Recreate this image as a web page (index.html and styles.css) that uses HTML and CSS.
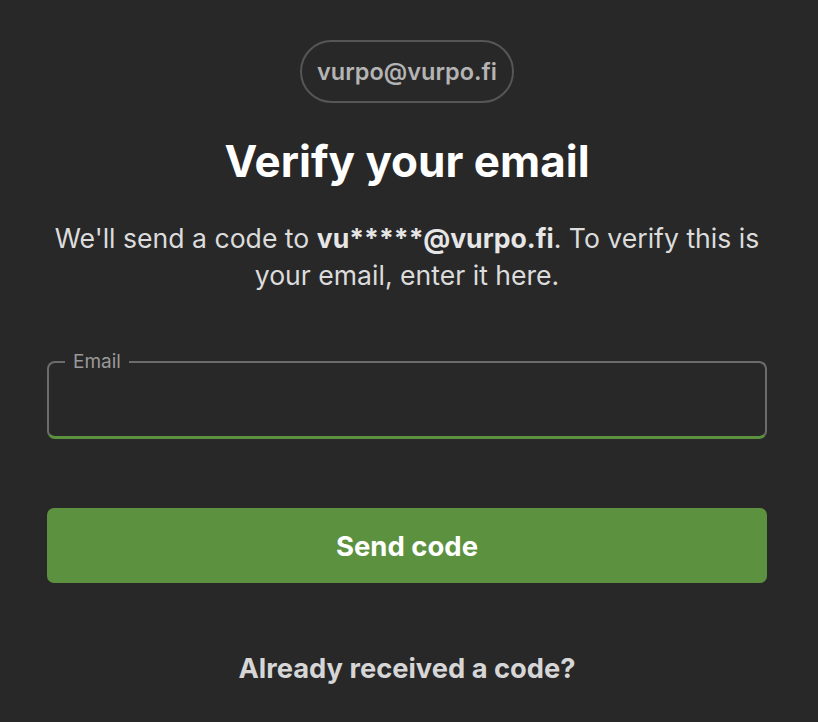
FILE: index.html
```html
<!DOCTYPE html>
<html lang="en">
<head>
<meta charset="utf-8">
<title>Verify your email</title>
<link rel="stylesheet" href="styles.css">
</head>
<body>
<main class="page">
  <div class="account-pill">vurpo@vurpo.fi</div>
  <h1 class="title">Verify your email</h1>
  <p class="desc">We'll send a code to <strong>vu*****@vurpo.fi</strong>. To verify this is your email, enter it here.</p>
  <fieldset class="field">
    <legend class="field-label">Email</legend>
    <input class="field-input" type="email" aria-label="Email">
  </fieldset>
  <button class="primary-btn" type="button">Send code</button>
  <div class="secondary-link">Already received a code?</div>
</main>
</body>
</html>
```
FILE: styles.css
```css
html, body {
  margin: 0;
  padding: 0;
  background: #282828;
}
body {
  font-family: Inter, "Noto Sans", "Liberation Sans", sans-serif;
  color: #e0e0e0;
}
.page {
  display: flex;
  flex-direction: column;
  align-items: center;
  padding: 40px 51px 0 47px;
}
.account-pill {
  box-sizing: border-box;
  height: 63px;
  padding: 0 15px;
  display: flex;
  align-items: center;
  border: 2px solid #565656;
  border-radius: 32px;
  font-size: 23.5px;
  font-weight: 600;
  color: #b4b4b4;
}
.title {
  margin: 30px 0 0;
  font-size: 44px;
  line-height: 56px;
  font-weight: 700;
  color: #ffffff;
}
.desc {
  margin: 31px 0 0;
  font-size: 26.6px;
  line-height: 37px;
  text-align: center;
  color: #dcdcdc;
}
.desc strong {
  font-weight: 700;
  color: #e6e6e6;
}
.field {
  box-sizing: border-box;
  align-self: stretch;
  margin: 58px 0 0;
  padding: 0 16px;
  border: 2px solid #6c6c6c;
  border-bottom: 3px solid #5c9140;
  border-radius: 8px;
  min-width: 0;
}
.field-label {
  padding: 0 8px;
  font-size: 19px;
  line-height: 20px;
  color: #9a9a9a;
}
.field-input {
  display: block;
  width: 100%;
  height: 62px;
  border: 0;
  background: transparent;
  outline: none;
  color: #e0e0e0;
  font: inherit;
  font-size: 22px;
}
.primary-btn {
  align-self: stretch;
  margin-top: 69px;
  height: 75px;
  border: 0;
  border-radius: 7px;
  background: #5c9140;
  color: #ffffff;
  font-family: inherit;
  font-size: 27.5px;
  font-weight: 700;
}
.secondary-link {
  margin-top: 69px;
  font-size: 27.3px;
  font-weight: 700;
  color: #d6d6d6;
}
```
